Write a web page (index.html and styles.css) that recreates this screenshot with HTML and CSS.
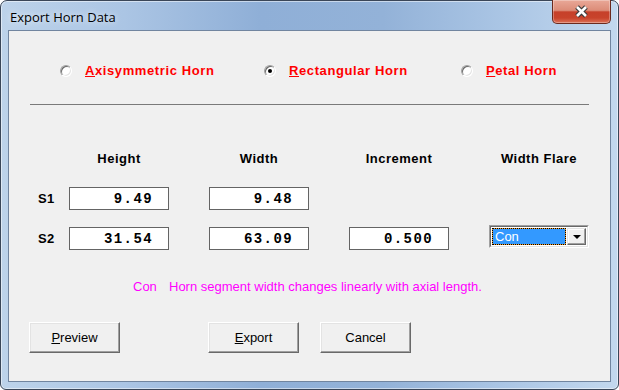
FILE: index.html
```html
<!DOCTYPE html>
<html lang="en">

<head>
    <meta charset="UTF-8">
    <meta name="viewport" content="width=device-width, initial-scale=1.0">
    <title>Export Horn Data</title>
    <link rel="stylesheet" href="styles.css">
</head>

<body>
    <div class="window">
        <div class="titlebar">
            <span class="title">Export Horn Data</span>
            <button type="button" class="close-btn" aria-label="Close">
                <svg width="15" height="13" viewBox="0 0 15 13">
                    <path d="M3 2 L12 11 M12 2 L3 11" stroke="#3a3a3a" stroke-width="5" fill="none" />
                    <path d="M3 2 L12 11 M12 2 L3 11" stroke="#ffffff" stroke-width="2.6" fill="none" />
                </svg>
            </button>
        </div>

        <div class="client">
            <div class="horn-types">
                <label class="horn-type">
                    <span class="radio"></span>
                    <span class="horn-label"><u>A</u>xisymmetric Horn</span>
                </label>
                <label class="horn-type">
                    <span class="radio checked"></span>
                    <span class="horn-label"><u>R</u>ectangular Horn</span>
                </label>
                <label class="horn-type">
                    <span class="radio"></span>
                    <span class="horn-label"><u>P</u>etal Horn</span>
                </label>
            </div>

            <div class="separator"></div>

            <div class="params">
                <div></div>
                <div class="col-head">Height</div>
                <div class="col-head">Width</div>
                <div class="col-head">Increment</div>
                <div class="col-head">Width Flare</div>

                <div class="row-label">S1</div>
                <input type="text" class="num-box" value="9.49">
                <input type="text" class="num-box" value="9.48">
                <div></div>
                <div></div>

                <div class="row-label">S2</div>
                <input type="text" class="num-box" value="31.54">
                <input type="text" class="num-box" value="63.09">
                <input type="text" class="num-box" value="0.500">
                <div class="combo">
                    <div class="combo-field">
                        <span class="combo-value">Con</span>
                        <span class="combo-arrow"><span class="arrow-down"></span></span>
                    </div>
                </div>
            </div>

            <p class="hint"><span class="hint-key">Con</span>Horn segment width changes linearly with axial length.</p>

            <div class="actions">
                <button type="button" class="btn"><u>P</u>review</button>
                <button type="button" class="btn btn-export"><u>E</u>xport</button>
                <button type="button" class="btn btn-cancel">Cancel</button>
            </div>
        </div>
    </div>
</body>

</html>
```

FILE: styles.css
```css
body {
    margin: 0;
    background: #fff;
    font-family: "Liberation Sans", Arial, sans-serif;
}

.window {
    width: 619px;
    height: 390px;
    box-sizing: border-box;
    display: flex;
    flex-direction: column;
    padding: 0 7px 7px 7px;
    border: 1px solid #3a4658;
    border-radius: 7px 7px 6px 6px;
    background: linear-gradient(to right, #bdd3ea 0%, #abc5e4 20%, #8fafd7 42%, #93b2d8 62%, #abc6e5 82%, #c3d8ee 100%);
    box-shadow: inset 0 0 0 1px rgba(255, 255, 255, 0.5);
}

.titlebar {
    height: 29px;
    display: flex;
    justify-content: space-between;
    align-items: flex-start;
}

.title {
    padding: 7px 0 0 2px;
    font-family: "Open Sans", sans-serif;
    font-size: 13px;
    line-height: 18px;
    color: #000;
    text-shadow: 0 0 6px rgba(255, 255, 255, 0.9);
}

.close-btn {
    width: 59px;
    height: 24px;
    margin-top: -1px;
    padding: 0;
    display: flex;
    align-items: center;
    justify-content: center;
    border: 1px solid #6b2a1e;
    border-top: none;
    border-radius: 0 0 5px 5px;
    background: linear-gradient(to bottom, #e9a898 0%, #dc8c78 45%, #c6402a 52%, #c8432b 78%, #dc7258 100%);
    box-shadow: inset 0 0 0 1px rgba(255, 255, 255, 0.3);
}

.client {
    flex: 1;
    border: 1px solid #71859f;
    background: #f0f0f0;
}

/* horn type radio row */
.horn-types {
    display: flex;
    align-items: center;
    height: 16px;
    margin-top: 32px;
    padding-left: 51px;
}

.horn-type {
    display: flex;
    align-items: center;
    flex: 0 0 204px;
}

.horn-type:nth-child(2) {
    flex-basis: 197px;
}

.horn-type:last-child {
    flex: 0 0 auto;
}

.radio {
    position: relative;
    flex: 0 0 12px;
    width: 12px;
    height: 12px;
    box-sizing: border-box;
    border-radius: 50%;
    border: 1px solid;
    border-color: #a0a0a0 #fff #fff #a0a0a0;
    background: #fff;
    box-shadow: inset 1px 1px 0 #696969, inset -1px -1px 0 #e3e3e3;
}

.radio.checked::after {
    content: "";
    position: absolute;
    left: 3px;
    top: 3px;
    width: 4px;
    height: 4px;
    border-radius: 50%;
    background: #000;
}

.horn-label {
    margin-left: 13px;
    font-size: 13px;
    font-weight: bold;
    line-height: 16px;
    letter-spacing: 0.6px;
    color: #ff0000;
    white-space: nowrap;
}

.separator {
    width: 559px;
    margin: 25px 0 0 21px;
    border-top: 1px solid #7a7a7a;
}

/* parameter table */
.params {
    display: grid;
    grid-template-columns: 31px 140px 140px 140px 100px;
    grid-template-rows: 19px 23px 23px;
    row-gap: 17px;
    margin: 46px 0 0 29px;
}

.col-head {
    width: 100px;
    align-self: start;
    text-align: center;
    font-size: 13px;
    font-weight: bold;
    line-height: 16px;
    letter-spacing: 0.5px;
    color: #000;
}

.row-label {
    align-self: center;
    font-size: 13px;
    font-weight: bold;
    line-height: 16px;
    letter-spacing: 0.3px;
}

.num-box {
    width: 100px;
    height: 23px;
    box-sizing: border-box;
    margin: 0;
    padding: 0 15px 0 0;
    border: 1px solid #646464;
    background: #fff;
    font-family: "Liberation Mono", monospace;
    font-size: 14px;
    font-weight: bold;
    letter-spacing: 1.4px;
    text-align: right;
    color: #000;
    outline: none;
}

.combo {
    width: 100px;
    height: 23px;
    box-sizing: border-box;
    margin-top: -2px;
    border: 1px solid;
    border-color: #a0a0a0 #fff #fff #a0a0a0;
}

.combo-field {
    display: flex;
    height: 100%;
    box-sizing: border-box;
    padding: 1px;
    border: 1px solid;
    border-color: #696969 #e3e3e3 #e3e3e3 #696969;
    background: #fff;
}

.combo-value {
    flex: 1;
    border: 1px dotted #000;
    background: linear-gradient(#3399ff, #3399ff) padding-box, linear-gradient(#f39c2a, #f39c2a) border-box;
    padding-left: 2px;
    font-size: 13px;
    line-height: 15px;
    color: #fff;
}

.combo-arrow {
    width: 19px;
    margin-left: 1px;
    box-sizing: border-box;
    display: flex;
    align-items: center;
    justify-content: center;
    border: 1px solid;
    border-color: #e3e3e3 #696969 #696969 #e3e3e3;
    background: #f0f0f0;
    box-shadow: inset -1px -1px 0 #a0a0a0, inset 1px 1px 0 #fff;
}

.arrow-down {
    width: 0;
    height: 0;
    border-left: 4px solid transparent;
    border-right: 4px solid transparent;
    border-top: 4px solid #000;
}

.hint {
    margin: 29px 0 0 0;
    padding-left: 124px;
    font-size: 13px;
    line-height: 16px;
    color: #ff00ff;
}

.hint-key {
    display: inline-block;
    width: 36px;
}

/* bottom buttons */
.actions {
    display: flex;
    margin: 27px 0 0 20px;
}

.btn {
    width: 91px;
    height: 31px;
    box-sizing: border-box;
    padding: 0;
    border: 1px solid;
    border-color: #fff #696969 #696969 #fff;
    background: #f0f0f0;
    box-shadow: inset -1px -1px 0 #a0a0a0, inset 1px 1px 0 #e3e3e3;
    font-family: "Liberation Sans", Arial, sans-serif;
    font-size: 13px;
    color: #000;
}

.btn-export {
    margin-left: 88px;
}

.btn-cancel {
    margin-left: 21px;
}
```
